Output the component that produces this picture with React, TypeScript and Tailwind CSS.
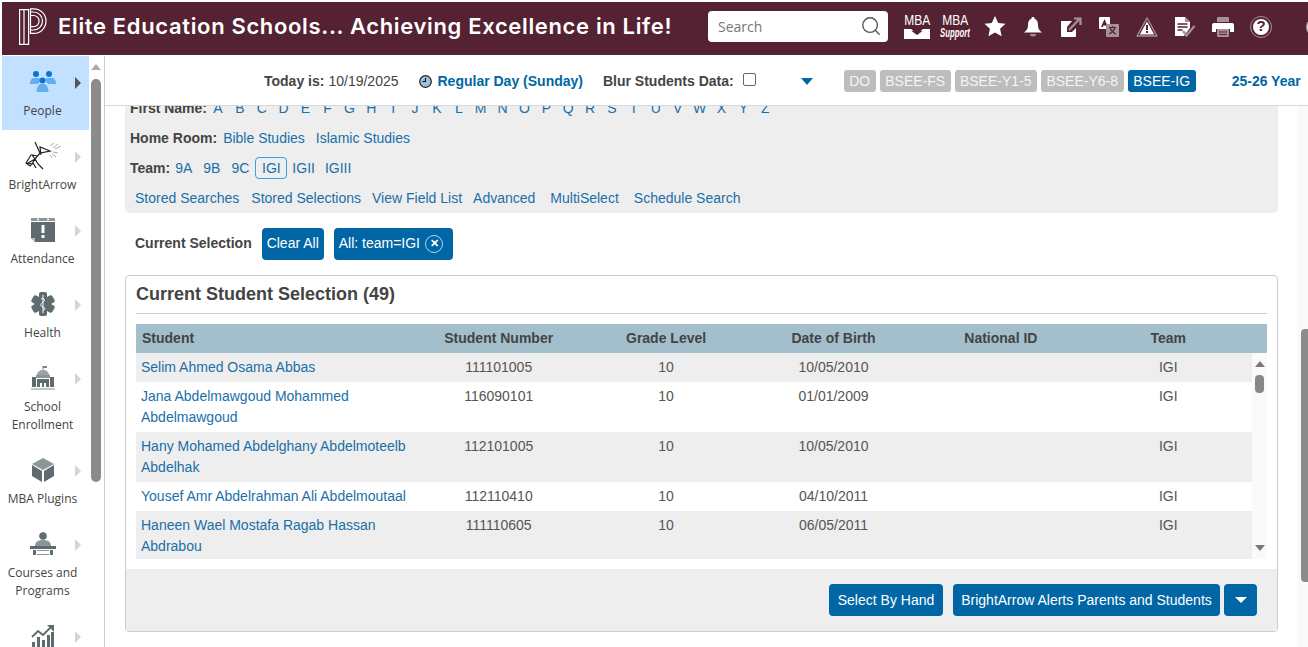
import { Search } from "lucide-react";

const letters = "ABCDEFGHIJKLMNOPQRSTUVWXYZ".split("");

const students = [
  { name: "Selim Ahmed Osama Abbas", num: "111101005", dob: "10/05/2010", h: "h-[29px]", bg: "bg-[#eeeeee]" },
  { name: "Jana Abdelmawgoud Mohammed Abdelmawgoud", num: "116090101", dob: "01/01/2009", h: "h-[50px]", bg: "bg-white" },
  { name: "Hany Mohamed Abdelghany Abdelmoteelb Abdelhak", num: "112101005", dob: "10/05/2010", h: "h-[50px]", bg: "bg-[#eeeeee]" },
  { name: "Yousef Amr Abdelrahman Ali Abdelmoutaal", num: "112110410", dob: "04/10/2011", h: "h-[29px]", bg: "bg-white" },
  { name: "Haneen Wael Mostafa Ragab Hassan Abdrabou", num: "111110605", dob: "06/05/2011", h: "h-[50px]", bg: "bg-[#eeeeee]" },
];

function PeopleIcon() {
  return (
    <svg width="26" height="24" viewBox="0 0 26 24">
      <circle cx="6" cy="4" r="3" fill="#0b74d8" />
      <circle cx="19" cy="4" r="3" fill="#0b74d8" />
      <path d="M0 14c0-4 2-6 4-6h4c2 0 3 1 3 2l-3 4H0z" fill="#64aef0" />
      <path d="M26 14c0-4-2-6-4-6h-4c-2 0-3 1-3 2l3 4h8z" fill="#64aef0" />
      <circle cx="12.5" cy="10.5" r="3" fill="#0b74d8" />
      <path d="M6.5 22c0-4 2-8 4-8h4c2 0 4 4 4 8z" fill="#64aef0" />
    </svg>
  );
}

function ArrowIcon() {
  return (
    <svg width="42" height="32" viewBox="0 0 42 32" fill="none" stroke="#222" strokeWidth="1.2">
      <path d="M13 2l5 11 10-2-10-4 1 8" />
      <path d="M18 13l-5 6-7 4 4 1 3-5 3 5 5 5M9 15l-5 8 4 3 3-3 3 5" />
      <path d="M13 19l-3-4 5 1" />
      <path d="M28 6l4-3M31 8l5-4M33 9l6-3M31 12l5 1M30 14l4 3M28 15l2 3" stroke="#aaa" strokeWidth="1" />
    </svg>
  );
}

function AttendanceIcon() {
  return (
    <svg width="24" height="24" viewBox="0 0 24 24">
      <path d="M0 0h24v3H0z" fill="#8c9698" />
      <path d="M0 4h24v20H4l-4-4z" fill="#5f6b6e" />
      <circle cx="7" cy="1.5" r="1" fill="#fff" />
      <circle cx="17" cy="1.5" r="1" fill="#fff" />
      <path d="M10.5 7h3v8h-3zM10.5 17h3v3h-3z" fill="#fff" />
      <path d="M0 20h4v4z" fill="#b9c0c2" />
    </svg>
  );
}

function HealthIcon() {
  return (
    <svg width="24" height="24" viewBox="0 0 24 24">
      <g fill="#5f6b6e">
        <rect x="8" y="0" width="8" height="24" rx="2" />
        <rect x="8" y="0" width="8" height="24" rx="2" transform="rotate(60 12 12)" />
        <rect x="8" y="0" width="8" height="24" rx="2" transform="rotate(120 12 12)" />
      </g>
      <path d="M12 3v18M10 7c3-1 5 1 2 3s-3 4 0 5 2 3 0 3" fill="none" stroke="#fff" strokeWidth="1" />
    </svg>
  );
}

function SchoolIcon() {
  return (
    <svg width="24" height="24" viewBox="0 0 24 24" fill="#7b8588">
      <path d="M12 0v4" stroke="#7b8588" strokeWidth="0.9" />
      <path d="M12 0h4v2h-4z" />
      <path d="M6 9c0-3 3-5 6-5s6 2 6 5z" fill="#9aa3a5" />
      <path d="M5 9h14v3H5z" fill="#8c9698" />
      <path d="M1 11h4v10H1zM19 11h4v10h-4z" fill="#5f6b6e" />
      <path d="M6 13h12v8h-3v-4h-2v4h-2v-4H9v4H6z" fill="#5f6b6e" />
      <path d="M0 22h24v2H0z" fill="#c2c8ca" />
    </svg>
  );
}

function BoxIcon() {
  return (
    <svg width="24" height="24" viewBox="0 0 24 24">
      <path d="M12 0l11 6-11 6L1 6z" fill="#8c9698" />
      <path d="M1 7l10 6v11L1 18z" fill="#5f6b6e" />
      <path d="M23 7l-10 6v11l10-6z" fill="#5f6b6e" />
    </svg>
  );
}

function CoursesIcon() {
  return (
    <svg width="26" height="24" viewBox="0 0 26 24" fill="#5f6b6e">
      <circle cx="13" cy="4" r="3.8" />
      <path d="M5 14c0-4 3-6 8-6s8 2 8 6z" fill="#8c9698" />
      <path d="M0 14h26v3H0z" />
      <path d="M3 18h3v5H3zM20 18h3v5h-3z" />
      <path d="M7 18h12v1H7zM7 22h12v1H7z" fill="#8c9698" />
    </svg>
  );
}

function ChartIcon() {
  return (
    <svg width="24" height="24" viewBox="0 0 24 24" fill="#5f6b6e">
      <path d="M1 13l6-6 5 4 9-9" fill="none" stroke="#5f6b6e" strokeWidth="1.8" />
      <path d="M16 1h7v7z" />
      <path d="M1 18h3v6H1zM6 13h3v11H6zM11 16h3v8h-3zM16 11h3v13h-3zM20 8h3v16h-3z" />
    </svg>
  );
}

const navItems = [
  { label: "People", icon: <PeopleIcon />, active: true },
  { label: "BrightArrow", icon: <ArrowIcon /> },
  { label: "Attendance", icon: <AttendanceIcon /> },
  { label: "Health", icon: <HealthIcon /> },
  { label: "School Enrollment", icon: <SchoolIcon /> },
  { label: "MBA Plugins", icon: <BoxIcon /> },
  { label: "Courses and Programs", icon: <CoursesIcon /> },
  { label: "", icon: <ChartIcon /> },
];

function Logo() {
  return (
    <svg width="28" height="37" viewBox="0 0 28 37" fill="none" stroke="#fff" strokeWidth="1.2" className="shrink-0">
      <path d="M0.6 1.6h9v34.8h-9zM5 1.6v34.8" />
      <path d="M11.5 0.8h3.5a12 12.3 0 0 1 0 24.6h-3.5z" />
      <path d="M11.5 4h3a9 9 0 0 1 0 18h-3" />
      <path d="M11.5 7.5h3a5.6 5.6 0 0 1 0 11.2h-3" />
    </svg>
  );
}

function HeaderIcons() {
  return (
    <div className="flex items-center text-white ml-[14px] shrink-0">
      <div className="w-[30px] h-[28px] flex flex-col items-center leading-none">
        <span className="text-[15px] leading-[14px] [transform:scaleX(0.8)]">MBA</span>
        <svg width="26" height="12" viewBox="0 0 26 12" className="shrink-0">
          <path d="M0 2h7l6 5 6-5h7v10H0z" fill="#fff" />
          <path d="M10.5 1h5v3h3l-5.5 4-5.5-4h3z" fill="#552233" />
        </svg>
      </div>
      <div className="ml-[8px] w-[30px] h-[28px] flex flex-col items-center leading-none">
        <span className="text-[15px] leading-[14px] [transform:scaleX(0.8)]">MBA</span>
        <span className="text-[12px] leading-[12px] italic font-bold whitespace-nowrap [transform:scaleX(0.65)]">Support</span>
      </div>
      <div className="ml-[6px] w-[38px] flex justify-center">
        <svg width="22" height="21" viewBox="0 0 22 21">
          <path d="M11 0l3.2 7 7.3.8-5.4 5 1.5 7.5L11 16.6l-6.6 3.7 1.5-7.5-5.4-5L7.8 7z" fill="#fff" />
        </svg>
      </div>
      <div className="w-[38px] flex justify-center">
        <svg width="18" height="20" viewBox="0 0 18 20">
          <path d="M9 0a1.5 1.5 0 0 1 1.5 1.8C13 2.5 14 5 14 8c0 4 1.5 5.5 4 7.5H0C2.500 13.500 4 12 4 8c0-3 1-5.500 3.500-6.200A1.500 1.500 0 0 1 9 0z" fill="#fff" />
          <path d="M6 17h6a3 2.500 0 0 1-6 0z" fill="#a89098" />
        </svg>
      </div>
      <div className="w-[38px] flex justify-center">
        <svg width="22" height="22" viewBox="0 0 22 22">
          <path d="M1 5h11L7 11v5h5l4-4v8a1 1 0 0 1-1 1H2a1 1 0 0 1-1-1z" fill="#fff" />
          <path d="M9 14L19 3.500M14 2.500h6.500V9" stroke="#a89098" strokeWidth="2.200" fill="none" />
        </svg>
      </div>
      <div className="w-[38px] flex justify-center">
        <svg width="22" height="22" viewBox="0 0 22 22">
          <rect x="1" y="1" width="11" height="12" rx="1" fill="#fff" />
          <path d="M6.500 3L3 11h1.800l.6-1.600h2.200l.6 1.600H10L6.500 3z" fill="#552233" />
          <rect x="8" y="8" width="13" height="13" rx="1" fill="#a89098" />
          <path d="M11 11.500h7M14.500 10v1.500M12 11.500c1 3.500 3 5 6 6.500M17 11.500c-1 3.500-3 5-6 6.500" stroke="#552233" strokeWidth="1.200" fill="none" />
        </svg>
      </div>
      <div className="w-[38px] flex justify-center">
        <svg width="22" height="20" viewBox="0 0 22 20">
          <path d="M11 1l10 18H1z" fill="none" stroke="#a89098" strokeWidth="1.300" strokeLinejoin="round" />
          <path d="M11 4.500l7.200 13H3.800z" fill="#fff" />
          <path d="M10 8h2v5h-2zM10 14h2v2h-2z" fill="#552233" />
        </svg>
      </div>
      <div className="w-[38px] flex justify-center">
        <svg width="22" height="22" viewBox="0 0 22 22">
          <path d="M1 1h10l5 5v6l-6 8H1z" fill="#fff" />
          <path d="M11 1v5h5z" fill="#a89098" />
          <path d="M3.500 8h10M3.500 11h10M3.500 14h5" stroke="#552233" strokeWidth="1.300" />
          <path d="M9 15l3.500 4.500 8-9.500" stroke="#a89098" strokeWidth="2.200" fill="none" />
        </svg>
      </div>
      <div className="w-[38px] flex justify-center">
        <svg width="22" height="20" viewBox="0 0 22 20">
          <path d="M5 1a1 1 0 0 1 1-1h10a1 1 0 0 1 1 1v4H5z" fill="#a89098" />
          <path d="M2 6h18a2 2 0 0 1 2 2v7h-4v-3H4v3H0V8a2 2 0 0 1 2-2z" fill="#fff" />
          <path d="M5 12h12v7a1 1 0 0 1-1 1H6a1 1 0 0 1-1-1z" fill="#a89098" />
          <path d="M7 15h8M7 17.500h8" stroke="#552233" strokeWidth="1" />
        </svg>
      </div>
      <div className="w-[38px] flex justify-center">
        <span className="w-[20px] h-[20px] rounded-full bg-white border-2 border-[#552233] outline outline-1 outline-[#a89098] flex items-center justify-center text-[#552233] text-[15px] font-bold">
          ?
        </span>
      </div>
      <div className="w-[20px] h-[20px] rounded-full bg-[#cfe0ee] border border-[#a89098] ml-[26px] shrink-0" />
    </div>
  );
}

function TopBar() {
  return (
    <div className="h-[50px] shrink-0 border-b border-[#d9d9d9] flex items-center pl-[159px] pt-[1px] text-[14px] text-[#444] whitespace-nowrap overflow-hidden">
      <b className="shrink-0">Today is:</b>
      <span className="ml-[4px] shrink-0">10/19/2025</span>
      <svg width="13" height="13" viewBox="0 0 13 13" className="ml-[20px] shrink-0">
        <circle cx="6.500" cy="6.500" r="5.800" fill="#9fc0dc" stroke="#222" strokeWidth="1.200" />
        <path d="M6.500 3v3.500H3.500" stroke="#111" strokeWidth="1.100" fill="none" />
      </svg>
      <b className="ml-[6px] text-[#0066a5] shrink-0">Regular Day (Sunday)</b>
      <b className="ml-[20px] shrink-0">Blur Students Data:</b>
      <span className="ml-[9px] w-[13px] h-[13px] border border-[#666] rounded-[2px] bg-white mb-[3px] shrink-0" />
      <span className="ml-[45px] w-0 h-0 shrink-0 border-l-[6px] border-r-[6px] border-t-[7px] border-l-transparent border-r-transparent border-t-[#0066a5]" />
      <div className="ml-[31px] flex gap-[4px] text-[14px] shrink-0">
        <span className="h-[22px] w-[32px] rounded-[3px] bg-[#bdbdbd] text-[#f4f4f4] flex items-center justify-center">DO</span>
        <span className="h-[22px] w-[71px] rounded-[3px] bg-[#bdbdbd] text-[#f4f4f4] flex items-center justify-center">BSEE-FS</span>
        <span className="h-[22px] w-[82px] rounded-[3px] bg-[#bdbdbd] text-[#f4f4f4] flex items-center justify-center">BSEE-Y1-5</span>
        <span className="h-[22px] w-[83px] rounded-[3px] bg-[#bdbdbd] text-[#f4f4f4] flex items-center justify-center">BSEE-Y6-8</span>
        <span className="h-[22px] w-[68px] rounded-[3px] bg-[#0066a5] text-white flex items-center justify-center">BSEE-IG</span>
      </div>
      <b className="ml-[36px] text-[#0066a5] shrink-0">25-26 Year</b>
    </div>
  );
}

function SearchPanel() {
  return (
    <div className="ml-[20px] w-[1153px] h-[120px] -mt-[13px] rounded-b-[5px] bg-[#eeeeee] px-[5px] text-[14px] text-[#1a6fa8] overflow-hidden shrink-0 flex flex-col">
      <div className="h-[30px] flex items-center">
        <b className="text-[#444]">First Name:</b>
        <div className="flex">
          {letters.map((l) => (
            <span key={l} className="w-[21.9px] text-center">{l}</span>
          ))}
        </div>
      </div>
      <div className="h-[30px] flex items-center">
        <b className="text-[#444]">Home Room:</b>
        <span className="ml-[6px]">Bible Studies</span>
        <span className="ml-[11px]">Islamic Studies</span>
      </div>
      <div className="h-[30px] flex items-center">
        <b className="text-[#444]">Team:</b>
        <span className="ml-[5px]">9A</span>
        <span className="ml-[11px]">9B</span>
        <span className="ml-[11px]">9C</span>
        <span className="ml-[6px] w-[32px] h-[22px] border border-[#3aa0dc] rounded-[4px] flex items-center justify-center">IGI</span>
        <span className="ml-[5px]">IGII</span>
        <span className="ml-[10px]">IGIII</span>
      </div>
      <div className="h-[30px] flex items-center pl-[5px]">
        <span>Stored Searches</span>
        <span className="ml-[12px]">Stored Selections</span>
        <span className="ml-[11px]">View Field List</span>
        <span className="ml-[11px]">Advanced</span>
        <span className="ml-[15px]">MultiSelect</span>
        <span className="ml-[15px]">Schedule Search</span>
      </div>
    </div>
  );
}

function StudentCard() {
  return (
    <div className="ml-[20px] mt-[15px] w-[1153px] h-[357px] border border-[#cccccc] rounded-[4px] flex flex-col shrink-0 overflow-hidden">
      <div className="mx-[10px] h-[38px] border-b border-[#cccccc] flex items-center text-[18px] font-bold text-[#444] shrink-0">
        Current Student Selection (49)
      </div>
      <div className="mx-[10px] mt-[10px] h-[29px] bg-[#a3bfcc] grid grid-cols-[279px_repeat(5,167.4px)] items-center text-[14px] font-bold text-[#444] shrink-0">
        <span className="pl-[6px]">Student</span>
        <span className="text-center">Student Number</span>
        <span className="text-center">Grade Level</span>
        <span className="text-center">Date of Birth</span>
        <span className="text-center">National ID</span>
        <span className="text-center">Team</span>
      </div>
      <div className="mx-[10px] h-[206px] flex shrink-0 overflow-hidden">
        <div className="w-[1116px] flex flex-col">
          {students.map((s) => (
            <div
              key={s.num}
              className={`${s.h} ${s.bg} grid grid-cols-[279px_repeat(5,167.4px)] text-[14px] leading-[21px] text-[#555] pt-[4px] shrink-0`}
            >
              <span className="pl-[5px] pr-[5px] text-[#1a6fa8]">{s.name}</span>
              <span className="text-center">{s.num}</span>
              <span className="text-center">10</span>
              <span className="text-center">{s.dob}</span>
              <span />
              <span className="text-center">IGI</span>
            </div>
          ))}
        </div>
        <div className="w-[15px] bg-[#fafafa] flex flex-col items-center pt-[8px] h-[206px]">
          <span className="w-0 h-0 border-l-[5px] border-r-[5px] border-b-[6px] border-l-transparent border-r-transparent border-b-[#777]" />
          <span className="w-[9px] h-[18px] rounded-[4px] bg-[#888] mt-[8px]" />
          <span className="mt-auto mb-[8px] w-0 h-0 border-l-[5px] border-r-[5px] border-t-[6px] border-l-transparent border-r-transparent border-t-[#777]" />
        </div>
      </div>
      <div className="flex-1 mt-[10px] bg-[#eeeeee] flex items-center justify-end pr-[20px] text-[14px] text-white">
        <span className="h-[32px] w-[114px] rounded-[4px] bg-[#0066a5] flex items-center justify-center">Select By Hand</span>
        <span className="ml-[10px] h-[32px] w-[267px] rounded-[4px] bg-[#0066a5] flex items-center justify-center">BrightArrow Alerts Parents and Students</span>
        <span className="ml-[4px] h-[32px] w-[33px] rounded-[4px] bg-[#0066a5] flex items-center justify-center">
          <span className="w-0 h-0 border-l-[6px] border-r-[6px] border-t-[6px] border-l-transparent border-r-transparent border-t-white" />
        </span>
      </div>
    </div>
  );
}

export default function App() {
  return (
    <div className="w-[1308px] h-[647px] overflow-hidden bg-white pt-[2px] pl-[2px] flex flex-col font-['Liberation_Sans',sans-serif]">
      <header className="h-[53px] shrink-0 bg-[#552233] flex items-center pl-[17px] pb-[4px] text-white overflow-hidden">
        <Logo />
        <span className="ml-[11px] w-[643px] shrink-0 text-[22px] font-semibold font-['Inter',sans-serif] tracking-[0.65px] whitespace-nowrap">
          Elite Education Schools... Achieving Excellence in Life!
        </span>
        <div className="ml-[7px] w-[180px] h-[31px] shrink-0 bg-white rounded-[4px] flex items-center pl-[10px] pr-[6px] pb-[1px] justify-between font-['Open_Sans',sans-serif] text-[14px] text-[#777]">
          <span>Search</span>
          <Search size={22} strokeWidth={1.5} className="text-[#555]" />
        </div>
        <HeaderIcons />
      </header>

      <div className="flex-1 flex min-h-0 pt-[1px]">
        <nav className="w-[87px] shrink-0 flex flex-col overflow-hidden font-['Open_Sans',sans-serif] text-[12px] leading-[18px] text-[#444]">
          {navItems.map((item) => (
            <div
              key={item.label}
              className={`relative pb-[10px] shrink-0 flex flex-col items-center pt-[10px] pr-[6px] ${item.active ? "bg-[#c2e0ff]" : ""}`}
            >
              <div className="h-[32px] flex items-center justify-center">{item.icon}</div>
              <span className="mt-[4px] min-h-[18px] text-center w-[80px]">{item.label}</span>
              <span
                className={`absolute left-[73px] top-[21px] w-0 h-0 border-t-[6px] border-b-[6px] border-l-[6px] border-t-transparent border-b-transparent ${item.active ? "border-l-[#555]" : "border-l-[#d5d5d5]"}`}
              />
            </div>
          ))}
        </nav>
        <div className="w-[16px] shrink-0 border-r border-[#cccccc] flex flex-col items-center pt-[8px] pr-[1px]">
          <span className="w-0 h-0 border-l-[5px] border-r-[5px] border-b-[6px] border-l-transparent border-r-transparent border-b-[#aaa]" />
          <span className="w-[10px] h-[403px] rounded-[5px] bg-[#8c8c8c] mt-[9px]" />
        </div>

        <main className="flex-1 min-w-0 flex flex-col">
          <TopBar />
          <div className="flex-1 min-h-0 flex">
            <div className="w-[1192px] shrink-0 flex flex-col overflow-hidden">
              <SearchPanel />
              <div className="ml-[30px] mt-[15px] h-[32px] flex items-center text-[14px] shrink-0">
                <b className="text-[#444] pb-[2px]">Current Selection</b>
                <span className="ml-[10px] w-[62px] h-[32px] rounded-[4px] bg-[#0066a5] text-white flex items-center justify-center pb-[2px]">Clear All</span>
                <span className="ml-[10px] w-[119px] h-[32px] rounded-[4px] bg-[#0066a5] text-white flex items-center pl-[5px] pb-[1px]">
                  <span className="pb-[1px]">All: team=IGI</span>
                  <span className="ml-[5px] w-[18px] h-[18px] rounded-full border border-[#b8d4e6] flex items-center justify-center text-[11px] leading-none font-bold">✕</span>
                </span>
              </div>
              <StudentCard />
            </div>
            <div className="flex-1 bg-[#fafafa] pl-[4px] pt-[223px]">
              <div className="w-[10px] h-[253px] rounded-l-[4px] bg-[#8c8c8c]" />
            </div>
          </div>
        </main>
      </div>
    </div>
  );
}
